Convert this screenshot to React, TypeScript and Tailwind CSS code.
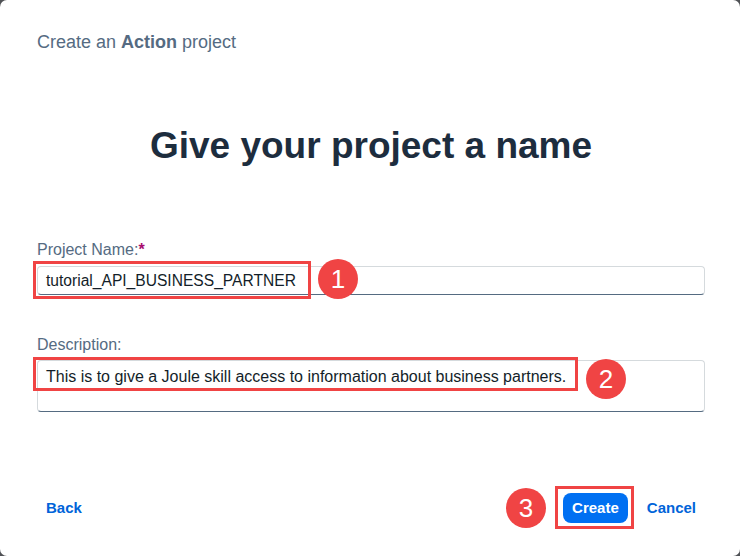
import React from 'react';

const Marker: React.FC<{ n: number; className: string }> = ({ n, className }) => (
  <span
    className={`absolute flex h-[40px] w-[40px] items-center justify-center rounded-full bg-[#f04444] text-[26px] leading-none text-white ${className}`}
  >
    {n}
  </span>
);

const App: React.FC = () => {
  return (
    <div className="h-[556px] w-[740px] bg-[#505256] font-['Liberation_Sans',Arial,sans-serif]">
      <div className="flex h-full flex-col rounded-[7px] bg-white pl-[37px] pr-[35px] pt-[30px] pb-[33px]">
        <h2 className="text-[18px] leading-6 text-[#556b82]">
          Create an <span className="font-bold">Action</span> project
        </h2>

        <h1 className="mt-[70px] text-center text-[37px] font-bold leading-[44px] text-[#1d2d3e]">
          Give your project a name
        </h1>

        <div className="mt-[72px] flex flex-col">
          <label className="text-[16px] leading-5 text-[#556b82]">
            Project Name:<span className="font-bold text-[#a80d6e]">*</span>
          </label>
          <div className="relative mt-[6px]">
            <div className="flex h-[29px] items-center rounded-[4px] border border-[#d5dadd] border-b-[#556b81] px-[8px] text-[15.6px] text-[#131e29]">
              tutorial_API_BUSINESS_PARTNER
            </div>
            <span className="absolute left-[-4px] top-[-5px] h-[38px] w-[278px] border-[3px] border-[#f04444]" />
            <Marker n={1} className="left-[281px] top-[-7px]" />
          </div>
        </div>

        <div className="mt-[40px] flex flex-col">
          <label className="text-[16px] leading-5 text-[#556b82]">Description:</label>
          <div className="relative mt-[5px]">
            <div className="h-[52px] rounded-[4px] border border-[#d5dadd] border-b-[#556b81] px-[8px] pt-[6px] text-[16px] leading-5 text-[#131e29]">
              This is to give a Joule skill access to information about business partners.
            </div>
            <span className="absolute left-[-4px] top-[-3px] h-[34px] w-[545px] border-[3px] border-[#f04444]" />
            <Marker n={2} className="left-[549px] top-[-1px]" />
          </div>
        </div>

        <div className="mt-auto flex items-center justify-between">
          <button className="px-[9px] text-[15px] font-bold text-[#0064d9]">Back</button>
          <div className="flex items-center">
            <div className="relative">
              <button className="h-[30px] rounded-[8px] bg-[#0070f2] px-[9px] text-[15px] font-bold text-white">
                Create
              </button>
              <span className="absolute left-[-8px] top-[-7px] h-[43px] w-[79px] border-[3px] border-[#f04444]" />
              <Marker n={3} className="left-[-57px] top-[-5px]" />
            </div>
            <button className="ml-[10px] px-[9px] text-[15px] font-bold text-[#0064d9]">Cancel</button>
          </div>
        </div>
      </div>
    </div>
  );
};

export default App;
